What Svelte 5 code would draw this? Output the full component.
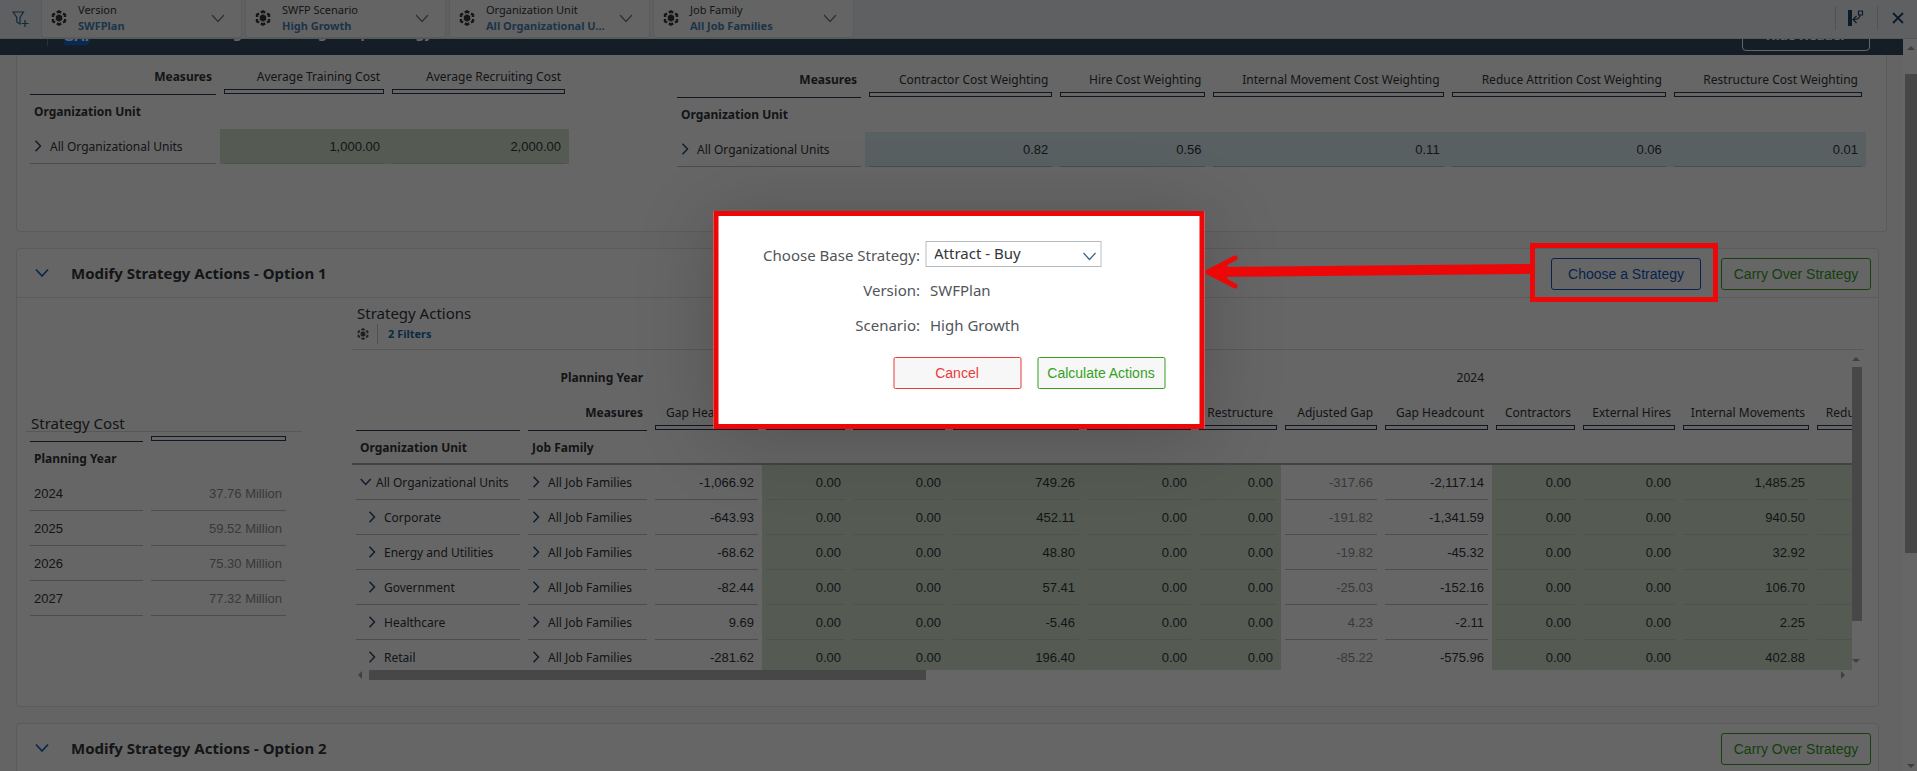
<script>
  const filters = [
    { label: 'Version', value: 'SWFPlan' },
    { label: 'SWFP Scenario', value: 'High Growth' },
    { label: 'Organization Unit', value: 'All Organizational U...' },
    { label: 'Job Family', value: 'All Job Families' }
  ];

  const costTable = {
    widths: [194, 168, 181],
    heads: ['Average Training Cost', 'Average Recruiting Cost'],
    values: ['1,000.00', '2,000.00'],
    tone: 'green'
  };
  const weightTable = {
    widths: [192, 191, 153, 238, 222, 196],
    heads: ['Contractor Cost Weighting', 'Hire Cost Weighting', 'Internal Movement Cost Weighting', 'Reduce Attrition Cost Weighting', 'Restructure Cost Weighting'],
    values: ['0.82', '0.56', '0.11', '0.06', '0.01'],
    tone: 'blue'
  };

  const strategyCost = [
    ['2024', '37.76 Million'],
    ['2025', '59.52 Million'],
    ['2026', '75.30 Million'],
    ['2027', '77.32 Million']
  ];

  const columns = [
    { name: 'Gap Headcount', width: 111, tone: '' },
    { name: 'Contractors', width: 87, tone: 'green' },
    { name: 'External Hires', width: 100, tone: 'green' },
    { name: 'Internal Movements', width: 134, tone: 'green' },
    { name: 'Reduce Attrition', width: 112, tone: 'green' },
    { name: 'Restructure', width: 86, tone: 'green' },
    { name: 'Adjusted Gap', width: 100, tone: 'muted' },
    { name: 'Gap Headcount', width: 111, tone: '' },
    { name: 'Contractors', width: 87, tone: 'green' },
    { name: 'External Hires', width: 100, tone: 'green' },
    { name: 'Internal Movements', width: 134, tone: 'green' },
    { name: 'Reduce Attrition', width: 112, tone: 'green' }
  ];
  const units = [
    { name: 'All Organizational Units', open: true, values: ['-1,066.92', '0.00', '0.00', '749.26', '0.00', '0.00', '-317.66', '-2,117.14', '0.00', '0.00', '1,485.25', ''] },
    { name: 'Corporate', values: ['-643.93', '0.00', '0.00', '452.11', '0.00', '0.00', '-191.82', '-1,341.59', '0.00', '0.00', '940.50', ''] },
    { name: 'Energy and Utilities', values: ['-68.62', '0.00', '0.00', '48.80', '0.00', '0.00', '-19.82', '-45.32', '0.00', '0.00', '32.92', ''] },
    { name: 'Government', values: ['-82.44', '0.00', '0.00', '57.41', '0.00', '0.00', '-25.03', '-152.16', '0.00', '0.00', '106.70', ''] },
    { name: 'Healthcare', values: ['9.69', '0.00', '0.00', '-5.46', '0.00', '0.00', '4.23', '-2.11', '0.00', '0.00', '2.25', ''] },
    { name: 'Retail', values: ['-281.62', '0.00', '0.00', '196.40', '0.00', '0.00', '-85.22', '-575.96', '0.00', '0.00', '402.88', ''] }
  ];
</script>

{#snippet modelIcon(size)}
  <svg width={size} height={size} viewBox="0 0 16 16" fill="none" stroke="currentColor" aria-hidden="true">
    <path d="M5.800 2.600L8 1.400l2.200 1.200M12 3.600l2 1.200v2.300M14 8.900v2.300l-2 1.200M10.200 13.400L8 14.600l-2.200-1.200M4 12.400l-2-1.200V8.900M2 7.100V4.800l2-1.200" stroke-width="2.400" />
    <path d="M8 4.300 11.200 6.100v3.800L8 11.700 4.800 9.900V6.100z" fill="currentColor" stroke="none" />
  </svg>
{/snippet}

{#snippet chevron(open)}
  <svg class="chev" width="16" height="12" viewBox="0 0 16 12" fill="none" stroke="currentColor" stroke-width="1.5" aria-hidden="true">
    <path d={open ? 'M.7 3l5 5.500L10.700 3' : 'M1.500 .7l5 5.300-5 5.300'} />
  </svg>
{/snippet}

{#snippet sectionChevron()}
  <svg width="14" height="10" viewBox="0 0 14 10" fill="none" stroke="currentColor" stroke-width="1.700" aria-hidden="true"><path d="M1 1.500l6 6.500 6-6.500" /></svg>
{/snippet}

{#snippet measureTable(t)}
  <table>
    <colgroup>{#each t.widths as w}<col style="width:{w}px" />{/each}</colgroup>
    <thead>
      <tr>
        <th><div class="measure corner"><b>Measures</b></div></th>
        {#each t.heads as h}<th><div class="measure"><span>{h}</span><i></i></div></th>{/each}
      </tr>
      <tr><th colspan={t.widths.length}><div class="dim">Organization Unit</div></th></tr>
    </thead>
    <tbody>
      <tr>
        <td><div class="cell">{@render chevron(false)}All Organizational Units</div></td>
        {#each t.values as v}<td class={t.tone}><div class="cell num">{v}</div></td>{/each}
      </tr>
    </tbody>
  </table>
{/snippet}

<div class="app">
  <div class="filterbar">
    <button class="add" aria-label="Add filter">
      <svg width="18" height="18" viewBox="0 0 18 18" fill="none" stroke="currentColor" stroke-width="1.200"><path d="M1 2h10.500L8 7.500v6.500L4.800 12V7.500zM9.500 13.500h7M13 10v7" /></svg>
    </button>
    {#each filters as f}
      <button class="chip">
        {@render modelIcon(16)}
        <span class="chip-text"><span>{f.label}</span><b>{f.value}</b></span>
        <svg class="drop" width="14" height="9" viewBox="0 0 14 9" fill="none" stroke="currentColor" stroke-width="1.200"><path d="M1 1l6 6.500L13 1" /></svg>
      </button>
    {/each}
    <span class="grow"></span>
    <button class="tool" aria-label="Show panel">
      <svg width="16" height="16" viewBox="0 0 16 16" fill="none" stroke="currentColor"><path d="M0 0h4v16H0z" fill="currentColor" stroke="none" /><path d="M10.500 1h4v4h-4zM12 5c0 3-2.500 4.500-6.500 4.500M8.500 6L5 9.500 8.500 13" stroke-width="1.200" /></svg>
    </button>
    <button class="tool" aria-label="Close">
      <svg width="12" height="12" viewBox="0 0 12 12" fill="none" stroke="currentColor" stroke-width="1.800"><path d="M1 1l10 10M11 1L1 11" /></svg>
    </button>
  </div>

  <div class="stage">
    <div class="scroller">
      <header class="shell">
        <div class="shell-bar">
          <span class="rule"></span>
          <span class="brand">SAP</span>
          <span class="title">Workforce Planning and Strategic Gap Strategy</span>
          <span class="grow"></span>
          <button class="hide">Hide Header</button>
        </div>
      </header>

      <section class="card first">
        <div>{@render measureTable(costTable)}</div>
        <div class="weights">{@render measureTable(weightTable)}</div>
      </section>

      <section class="card">
        <div class="card-head">
          {@render sectionChevron()}
          <h2>Modify Strategy Actions - Option 1</h2>
          <button class="btn blue-btn">Choose a Strategy</button>
          <button class="btn green-btn">Carry Over Strategy</button>
        </div>
        <div class="card-body">
          <div class="cost">
            <h3>Strategy Cost</h3>
            <table>
              <colgroup><col style="width:121px" /><col style="width:143px" /></colgroup>
              <thead>
                <tr class="thin"><th><div class="line"></div></th><th><div class="bar"></div></th></tr>
                <tr><th colspan="2"><div class="dim">Planning Year</div></th></tr>
              </thead>
              <tbody>
                {#each strategyCost as [year, amount]}
                  <tr><td><div class="cell num left">{year}</div></td><td class="muted"><div class="cell num">{amount}</div></td></tr>
                {/each}
              </tbody>
            </table>
          </div>

          <div class="actions">
            <div class="actions-head">
              <h3>Strategy Actions</h3>
              <div class="filters">{@render modelIcon(12)}<a href="#filters">2 Filters</a></div>
            </div>
            <div class="grid-area">
              <div class="viewport">
                <table class="wide">
                  <colgroup>
                    <col style="width:172px" /><col style="width:127px" />
                    {#each columns as c}<col style="width:{c.width}px" />{/each}
                  </colgroup>
                  <thead>
                    <tr>
                      <th colspan="2"><div class="year"><b>Planning Year</b></div></th>
                      <th colspan="7"></th>
                      <th><div class="year">2024</div></th>
                      <th colspan="4"></th>
                    </tr>
                    <tr>
                      <th><div class="measure corner"></div></th>
                      <th><div class="measure corner"><b>Measures</b></div></th>
                      {#each columns as c}<th><div class="measure"><span>{c.name}</span><i></i></div></th>{/each}
                    </tr>
                    <tr class="thick">
                      <th><div class="dim">Organization Unit</div></th>
                      <th><div class="dim">Job Family</div></th>
                      <th colspan={columns.length}></th>
                    </tr>
                  </thead>
                  <tbody>
                    {#each units as u}
                      <tr>
                        <td><div class="cell" class:nested={!u.open}>{@render chevron(u.open)}{u.name}</div></td>
                        <td><div class="cell">{@render chevron(false)}All Job Families</div></td>
                        {#each u.values as v, i}<td class={columns[i].tone}><div class="cell num">{v}</div></td>{/each}
                      </tr>
                    {/each}
                  </tbody>
                </table>
              </div>
              <div class="vbar"><i class="tri up"></i><i class="thumb"></i><span class="grow"></span><i class="tri down"></i></div>
            </div>
            <div class="hbar"><i class="tri lt"></i><i class="thumb"></i><span class="grow"></span><i class="tri rt"></i></div>
          </div>
        </div>
      </section>

      <section class="card last">
        <div class="card-head">
          {@render sectionChevron()}
          <h2>Modify Strategy Actions - Option 2</h2>
          <button class="btn green-btn">Carry Over Strategy</button>
        </div>
      </section>
    </div>
    <div class="pagebar"><i class="tri up"></i><i class="thumb"></i><span class="grow"></span><i class="tri down"></i></div>
  </div>

  <div class="overlay"></div>
  <div class="highlight"></div>
  <svg class="arrow" width="328" height="36" viewBox="0 0 328 36" fill="none" stroke="#ec0808" stroke-linecap="round" stroke-linejoin="round" aria-hidden="true">
    <path d="M10 17L326 14" stroke-width="10" />
    <path d="M32 3L5 17l27 14" stroke-width="5" />
    <path d="M5 17L26 7 22 17l4 10z" fill="#ec0808" stroke="none" />
  </svg>

  <div class="modal" role="dialog" aria-label="Choose Base Strategy">
    <div class="form">
      <label for="base">Choose Base Strategy:</label>
      <span class="select">
        <select id="base"><option>Attract - Buy</option></select>
        <svg width="14" height="9" viewBox="0 0 14 9" fill="none" stroke="#346187" stroke-width="1.200"><path d="M1 1l6 6.500L13 1" /></svg>
      </span>
      <span>Version:</span><span class="val">SWFPlan</span>
      <span>Scenario:</span><span class="val">High Growth</span>
    </div>
    <div class="buttons">
      <button class="btn cancel">Cancel</button>
      <button class="btn calc">Calculate Actions</button>
    </div>
  </div>
</div>

<style>
  :global(body) { overflow: hidden; }
  .app { position: relative; height: 100vh; display: flex; flex-direction: column; overflow: hidden; background: #f9f9f9; color: #32363a; font-family: 'Noto Sans', sans-serif; font-size: 12px; }
  button { font: inherit; color: inherit; margin: 0; padding: 0; border: 0; background: none; }
  svg { flex: none; }
  .grow { flex: 1; }

  .filterbar { flex: none; height: 38px; display: flex; gap: 3px; background: #eef1f3; border-bottom: 1px solid #d0dbe2; color: #346187; }
  .add { width: 38px; display: flex; align-items: center; justify-content: flex-end; padding-right: 8px; box-sizing: border-box; }
  .chip { width: 201px; height: 38px; box-sizing: border-box; display: flex; align-items: center; gap: 11px; padding: 0 16px 2px 9px; background: #fbfbfb; border: 1px solid #e2e5e7; border-top: 0; border-radius: 0 0 4px 4px; color: #32363a; text-align: left; }
  .chip-text { flex: 1; display: flex; flex-direction: column; font-size: 11px; line-height: 16px; white-space: nowrap; }
  .chip b { color: #4683b5; }
  .drop { color: #6a7888; margin-top: 2px; }
  .tool { width: 40px; height: 24px; margin-top: 6px; display: flex; align-items: center; justify-content: center; border-left: 1px solid #c8cdd1; color: #1c4568; }
  .tool:last-child { margin-left: -1px; }

  .stage { flex: 1; min-height: 0; display: flex; }
  .scroller { flex: 1; min-width: 0; overflow: hidden; }
  .shell { height: 16px; overflow: hidden; display: flex; align-items: flex-end; background: #354a5f; }
  .shell-bar { flex: 1; height: 40px; display: flex; align-items: center; color: #fff; padding: 0 33px 0 47px; }
  .rule { width: 1px; height: 22px; background: #6a7a8a; }
  .brand { margin-left: 16px; width: 36px; height: 20px; background: #1566d6; clip-path: polygon(0 0, 100% 0, 66% 100%, 0 100%); font: 700 15px/22px 'Liberation Sans', Arial, sans-serif; }
  .title { margin-left: 4px; padding-bottom: 5px; font-size: 14px; font-weight: 700; }
  .hide { width: 128px; height: 32px; box-sizing: border-box; border: 1px solid #fff; border-radius: 4px; font-size: 13px; font-weight: 700; }

  .card { margin: 16px 24px 0 16px; border: 1px solid #e3e3e3; border-radius: 4px; background: #fff; }
  .first { margin: 0 16px 0 16px; height: 172px; padding: 4px 20px 0 9px; display: flex; gap: 104px; border-top: 0; border-radius: 0 0 4px 4px; }
  .weights { flex: 1; margin-top: 3px; }
  .weights :global(table) { width: 100%; }
  .card-head { height: 48px; padding: 0 7px 0 18px; display: flex; align-items: center; gap: 20px; border-bottom: 1px solid #e3e3e3; color: #1b5fc0; }
  .card-head h2 { flex: 1; margin: 0 0 0 2px; font-size: 15px; font-weight: 700; color: #32363a; }
  .last { height: 90px; }
  .btn { width: 150px; height: 32px; box-sizing: border-box; border: 1px solid currentColor; border-radius: 3px; font: 14px 'Liberation Sans', Arial, sans-serif; }
  .card-head .btn { margin-top: 2px; }
  .blue-btn { color: #0f59c4; }
  .green-btn { color: #35a01e; }

  .card-body { display: flex; gap: 50px; padding: 0 15px 0 9px; }
  .cost { width: 276px; padding-top: 117px; }
  .actions { flex: 1; min-width: 0; padding: 4px 0 26px; }
  h3 { margin: 0; padding-left: 5px; font-size: 15px; font-weight: 400; line-height: 22px; }
  .cost h3 { line-height: 16px; border-bottom: 1px solid #dcdcdc; }
  .actions-head { padding-bottom: 5px; border-bottom: 1px solid #dcdcdc; }
  .filters { display: flex; align-items: center; gap: 8px; padding-left: 5px; height: 20px; color: #4a4f54; }
  .filters a { height: 20px; line-height: 20px; padding-left: 10px; border-left: 1px solid #c8c8c8; font-size: 11px; font-weight: 700; color: #1a6cae; text-decoration: none; }
  .grid-area { display: flex; }
  .viewport { flex: 1; min-width: 0; overflow: hidden; margin-top: 10px; height: 310px; }

  table { table-layout: fixed; border-collapse: separate; border-spacing: 0; width: min-content; }
  .wide { width: 1553px; }
  th, td { padding: 0; font-weight: 400; text-align: left; white-space: nowrap; }
  .measure, .line, .bar, .dim, .cell, .year { margin: 0 4px; box-sizing: border-box; }
  .measure { height: 36px; padding-top: 6px; text-align: right; line-height: 24px; }
  .measure span, .measure b { display: block; padding: 0 4px; }
  .measure i { display: block; height: 5px; box-sizing: border-box; border: 1px solid #2b3b50; }
  .corner { border-bottom: 1px solid #2b3b50; }
  .year { height: 35px; line-height: 35px; padding: 0 4px; text-align: right; }
  .dim { height: 34px; line-height: 33px; padding: 0 4px; font-weight: 700; }
  .thin th { height: 10px; vertical-align: bottom; }
  .line { border-bottom: 1px solid #2b3b50; }
  .bar { height: 5px; margin-bottom: 1px; border: 1px solid #2b3b50; }
  .thick th { border-bottom: 2px solid #a4a9ab; }
  .thick .dim { height: 32px; }
  .cell { height: 35px; padding: 0 4px; display: flex; align-items: center; border-bottom: 1px solid #bdbdbd; }
  .nested { padding-left: 12px; }
  .num { justify-content: flex-end; font: 13px 'Liberation Sans', Arial, sans-serif; }
  .left { justify-content: flex-start; }
  .chev { color: #2b4a6b; }
  .green { background: #d5e2cf; }
  .green .cell { border-color: #c6cdc2; }
  .blue { background: #dcf0f5; }
  .blue .cell { border-color: #bdbdbd; }
  .muted { color: #8e8e8e; }

  .vbar { width: 11px; display: flex; flex-direction: column; padding: 7px 0; }
  .vbar .thumb { height: 254px; width: 10px; margin-top: 6px; background: #b2b2b2; }
  .hbar { display: flex; height: 10px; padding: 0 18px 0 6px; }
  .hbar .thumb { width: 557px; margin-left: 7px; background: #b2b2b2; }
  .hbar .tri { margin-top: 1px; }
  .pagebar { width: 14px; display: flex; flex-direction: column; padding: 7px 0 3px; box-sizing: border-box; background: #fff; align-items: flex-end; }
  .pagebar .thumb { width: 12px; height: 479px; margin-top: 24px; background: #b2b2b2; }
  .pagebar .tri { margin-right: 2px; }
  .tri { display: block; width: 8px; height: 4px; background: #a0a0a0; }
  .up { clip-path: polygon(50% 0, 100% 100%, 0 100%); }
  .down { clip-path: polygon(0 0, 100% 0, 50% 100%); }
  .lt, .rt { width: 4px; height: 8px; }
  .lt { clip-path: polygon(100% 0, 100% 100%, 0 50%); }
  .rt { clip-path: polygon(0 0, 100% 50%, 0 100%); }

  .overlay { position: absolute; inset: 0; background: rgba(0, 0, 0, 0.6); }
  .highlight { position: absolute; top: 243px; right: 199px; width: 188px; height: 59px; box-sizing: border-box; border: 5px solid #ec0808; }
  .arrow { position: absolute; top: 255px; right: 386px; z-index: 1; }
  .modal { position: absolute; top: 211px; left: 50%; transform: translateX(-50%); width: 491px; box-sizing: border-box; border: 5px solid #ec0808; background: #fff; box-shadow: 0 8px 80px rgba(0, 0, 0, 0.2); padding: 25px 34px 35px; color: #51555a; font-size: 15px; }
  .form { display: grid; grid-template-columns: 168px 1fr; column-gap: 5px; grid-auto-rows: 35px; line-height: 28px; text-align: right; }
  .val { text-align: left; padding-left: 5px; }
  .select { position: relative; width: 176px; height: 26px; }
  .select select { display: block; appearance: none; width: 100%; height: 26px; box-sizing: border-box; border: 1px solid #b9bcbf; border-radius: 0; background: #fff; padding: 0 8px 2px; font: inherit; color: #32363a; line-height: 22px; }
  .select svg { position: absolute; right: 5px; top: 11px; pointer-events: none; }
  .buttons { display: flex; justify-content: flex-end; gap: 16px; margin-top: 11px; }
  .buttons .btn { width: 128px; background: #f7f7f7; border-radius: 2px; }
  .cancel { color: #ee3939; }
  .calc { color: #35a01e; }
</style>
